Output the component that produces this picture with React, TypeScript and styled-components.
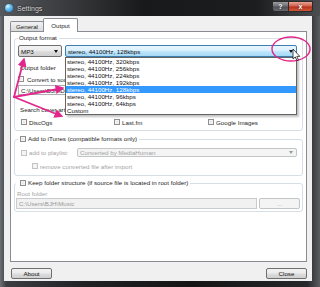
import React from "react";
import styled, { createGlobalStyle } from "styled-components";

const GlobalStyle = createGlobalStyle`
  html, body {
    margin: 0;
    padding: 0;
    background: #1b1b1b;
  }
  body {
    font-family: "Liberation Sans", Arial, sans-serif;
  }
  * {
    box-sizing: border-box;
  }
`;

const Window = styled.div`
  position: relative;
  width: 320px;
  height: 287px;
  display: flex;
  flex-direction: column;
  overflow: hidden;
  font-size: 6.2px;
  color: #1e1e1e;
  background: linear-gradient(
    90deg,
    #6c6f73 0%,
    #3b3d41 2%,
    #222326 25%,
    #141414 60%,
    #27282b 96%,
    #5a5d61 100%
  );
`;

const TitleBar = styled.div`
  height: 16px;
  flex-shrink: 0;
  display: flex;
  align-items: center;
  padding: 0 7px 0 5px;
  background: linear-gradient(90deg, #55585c 0%, #3a3c3f 20%, #18191a 45%, #1c1d1f 80%, #4b4d50 100%);
`;

const AppIcon = styled.span`
  width: 8px;
  height: 8px;
  border-radius: 50%;
  background: radial-gradient(circle at 35% 30%, #e9f7ff 0%, #6cc3f2 35%, #1f78c4 100%);
  box-shadow: 0 0 1px #0b3c66;
`;

const Title = styled.span`
  margin-left: 4px;
  font-size: 7px;
  color: #d9d9d9;
  text-shadow: 0 0 2px #000;
`;

const CaptionButtons = styled.div`
  margin-left: auto;
  align-self: flex-start;
  display: flex;
  margin-top: 1px;
`;

const CaptionButton = styled.span<{ $close?: boolean }>`
  height: 11px;
  width: ${(p) => (p.$close ? 24 : 17)}px;
  display: flex;
  align-items: center;
  justify-content: center;
  font-size: 7px;
  font-weight: bold;
  color: #fff;
  border: 1px solid #2a2a2a;
  border-left: ${(p) => (p.$close ? "none" : "1px solid #2a2a2a")};
  border-radius: ${(p) => (p.$close ? "0 0 3px 0" : "0 0 0 3px")};
  background: ${(p) =>
    p.$close
      ? "linear-gradient(180deg, #e8a496 0%, #d0604c 45%, #b8321c 55%, #cf5a3a 100%)"
      : "linear-gradient(180deg, #9a9da1 0%, #6d7074 45%, #4f5256 55%, #66696d 100%)"};
  text-shadow: 0 0 2px #333;
`;

const Client = styled.div`
  flex: 1;
  margin: 0 8px 6px 4px;
  background: #f0f0f0;
  display: flex;
  flex-direction: column;
  padding: 2px 5px 2px 6px;
`;

const TabStrip = styled.div`
  height: 13px;
  display: flex;
  align-items: flex-end;
  flex-shrink: 0;
`;

const Tab = styled.div<{ $active?: boolean }>`
  position: relative;
  z-index: ${(p) => (p.$active ? 2 : 1)};
  width: ${(p) => (p.$active ? 35 : 34)}px;
  height: ${(p) => (p.$active ? 14 : 10)}px;
  margin-bottom: ${(p) => (p.$active ? -1 : 0)}px;
  margin-left: ${(p) => (p.$active ? -1 : 0)}px;
  display: flex;
  align-items: center;
  justify-content: center;
  padding-bottom: ${(p) => (p.$active ? 1 : 0)}px;
  border: 1px solid #898c95;
  border-bottom: none;
  border-radius: 2px 2px 0 0;
  background: ${(p) => (p.$active ? "#ffffff" : "linear-gradient(180deg, #f2f2f2 0%, #e6e6e6 50%, #d9d9d9 100%)")};
`;

const Panel = styled.div`
  flex: 1;
  background: #ffffff;
  border: 1px solid #898c95;
  padding: 2px 3px 0 3px;
  display: flex;
  flex-direction: column;
`;

const Group = styled.fieldset<{ $pl: number; $pr: number; $pb: number; $gap: number }>`
  margin: ${(p) => p.$gap}px 0 0 0;
  min-width: 0;
  border: 1px solid #d5dfe5;
  border-radius: 3px;
  padding: 0 ${(p) => p.$pr}px ${(p) => p.$pb}px ${(p) => p.$pl}px;
  display: flex;
  flex-direction: column;
`;

const Legend = styled.legend<{ $pl: number }>`
  height: 8px;
  line-height: 8px;
  padding: 0 2px 0 ${(p) => p.$pl}px;
  display: flex;
  align-items: center;
  gap: 2px;
  color: #1e1e1e;
`;

const Row = styled.div<{ $h: number; $mt: number; $pl?: number; $gap?: number }>`
  height: ${(p) => p.$h}px;
  margin-top: ${(p) => p.$mt}px;
  padding-left: ${(p) => p.$pl ?? 0}px;
  display: flex;
  align-items: center;
  gap: ${(p) => p.$gap ?? 2}px;
  white-space: nowrap;
`;

const CoverRow = styled.div`
  height: 8px;
  margin-top: 5px;
  padding-left: 3px;
  display: grid;
  grid-template-columns: 93px 94px 1fr;
  align-items: center;
`;

const CheckItem = styled.div`
  display: flex;
  align-items: center;
  gap: 2px;
`;

const Label = styled.span<{ $disabled?: boolean; $w?: number }>`
  color: ${(p) => (p.$disabled ? "#a3a3a3" : "#1e1e1e")};
  width: ${(p) => (p.$w ? `${p.$w}px` : "auto")};
  flex-shrink: 0;
`;

const Check = styled.span<{ $disabled?: boolean }>`
  width: 6px;
  height: 6px;
  flex-shrink: 0;
  border: 1px solid ${(p) => (p.$disabled ? "#c3c3c3" : "#8e8f8f")};
  background: ${(p) =>
    p.$disabled ? "#f4f4f4" : "linear-gradient(135deg, #dcdcdc 0%, #f7f7f7 100%)"};
  box-shadow: inset 0 0 0 1px #f4f4f4;
`;

const ComboWrap = styled.div<{ $w?: number }>`
  position: relative;
  width: ${(p) => (p.$w ? `${p.$w}px` : "auto")};
  flex: ${(p) => (p.$w ? "none" : "1")};
  height: 100%;
  display: flex;
  align-items: center;
`;

const Combo = styled.div<{ $variant: "button" | "open" | "disabled"; $h?: number }>`
  width: 100%;
  height: ${(p) => (p.$h ? `${p.$h}px` : "100%")};
  display: flex;
  align-items: center;
  padding: 0 3px 0 2px;
  border-radius: 2px;
  border: 1px solid
    ${(p) => (p.$variant === "open" ? "#3c7fb1" : p.$variant === "disabled" ? "#c2c5c8" : "#707070")};
  color: ${(p) => (p.$variant === "disabled" ? "#a3a3a3" : "#111")};
  background: ${(p) =>
    p.$variant === "open"
      ? "linear-gradient(180deg, #eaf6fd 0%, #d9f0fc 45%, #bee6fd 55%, #a7d9f5 100%)"
      : p.$variant === "disabled"
      ? "#f4f4f4"
      : "linear-gradient(180deg, #f2f2f2 0%, #ebebeb 45%, #dddddd 55%, #cfcfcf 100%)"};
`;

const Arrow = styled.span<{ $disabled?: boolean }>`
  margin-left: auto;
  width: 0;
  height: 0;
  border-left: 2.5px solid transparent;
  border-right: 2.5px solid transparent;
  border-top: 3px solid ${(p) => (p.$disabled ? "#9a9a9a" : "#111")};
`;

const DropList = styled.ul`
  position: absolute;
  top: 100%;
  left: 0;
  right: 0;
  z-index: 5;
  margin: 0;
  padding: 0;
  list-style: none;
  background: #ffffff;
  border: 1px solid #646464;
  box-shadow: 2px 2px 2px rgba(0, 0, 0, 0.25);
`;

const DropItem = styled.li<{ $selected?: boolean }>`
  height: 7px;
  line-height: 7px;
  padding-left: 1px;
  color: ${(p) => (p.$selected ? "#ffffff" : "#111")};
  background: ${(p) => (p.$selected ? "#3399ff" : "transparent")};
`;

const TextField = styled.div<{ $disabled?: boolean }>`
  flex: 1;
  height: 100%;
  display: flex;
  align-items: center;
  padding-left: 2px;
  border: 1px solid ${(p) => (p.$disabled ? "#c9cccf" : "#abadb3")};
  background: ${(p) => (p.$disabled ? "#f1f1f1" : "#ffffff")};
  color: ${(p) => (p.$disabled ? "#9a9a9a" : "#1e1e1e")};
`;

const Button = styled.div<{ $w: number; $disabled?: boolean }>`
  width: ${(p) => p.$w}px;
  height: 11px;
  flex-shrink: 0;
  display: flex;
  align-items: center;
  justify-content: center;
  border-radius: 2px;
  border: 1px solid ${(p) => (p.$disabled ? "#c2c5c8" : "#707070")};
  color: ${(p) => (p.$disabled ? "#a3a3a3" : "#111")};
  background: ${(p) =>
    p.$disabled
      ? "#f4f4f4"
      : "linear-gradient(180deg, #f2f2f2 0%, #ebebeb 45%, #dddddd 55%, #cfcfcf 100%)"};
`;

const Footer = styled.div`
  height: 17px;
  flex-shrink: 0;
  display: flex;
  justify-content: space-between;
  align-items: flex-start;
  padding: 6px 0 0 1px;
`;

const Annotations = styled.svg`
  position: absolute;
  left: 0;
  top: 0;
  z-index: 10;
  pointer-events: none;
`;

const bitrates = ["320", "256", "224", "192", "128", "96", "64"];

export default function App() {
  const pink = "#e2268c";
  return (
    <>
      <GlobalStyle />
      <Window>
        <TitleBar>
          <AppIcon />
          <Title>Settings</Title>
          <CaptionButtons>
            <CaptionButton>?</CaptionButton>
            <CaptionButton $close>x</CaptionButton>
          </CaptionButtons>
        </TitleBar>
        <Client>
          <TabStrip>
            <Tab>General</Tab>
            <Tab $active>Output</Tab>
          </TabStrip>
          <Panel>
            <Group $pl={3} $pr={5} $pb={4} $gap={0}>
              <Legend $pl={1}>Output format</Legend>
              <Row $h={12} $mt={3} $gap={3}>
                <ComboWrap $w={44}>
                  <Combo $variant="button">
                    MP3
                    <Arrow />
                  </Combo>
                </ComboWrap>
                <ComboWrap>
                  <Combo $variant="open">
                    stereo, 44100Hz, 128kbps
                    <Arrow />
                  </Combo>
                  <DropList>
                    {bitrates.map((b) => (
                      <DropItem key={b} $selected={b === "128"}>
                        stereo, 44100Hz, {b}kbps
                      </DropItem>
                    ))}
                    <DropItem>Custom</DropItem>
                  </DropList>
                </ComboWrap>
              </Row>
              <Row $h={8} $mt={6} $pl={2}>
                <Label>Output folder</Label>
              </Row>
              <Row $h={8} $mt={4} $gap={3}>
                <Check />
                <Label>Convert to source folder</Label>
              </Row>
              <Row $h={10} $mt={2} $gap={2}>
                <TextField>C:\Users\BJH\Desktop</TextField>
                <Button $w={40}>...</Button>
              </Row>
              <Row $h={8} $mt={10} $pl={2}>
                <Label>Search cover art in:</Label>
              </Row>
              <CoverRow>
                <CheckItem>
                  <Check />
                  <Label>DiscOgs</Label>
                </CheckItem>
                <CheckItem>
                  <Check />
                  <Label>Last.fm</Label>
                </CheckItem>
                <CheckItem>
                  <Check />
                  <Label>Google Images</Label>
                </CheckItem>
              </CoverRow>
            </Group>

            <Group $pl={3} $pr={5} $pb={5} $gap={4}>
              <Legend $pl={2}>
                <Check />
                Add to iTunes (compatible formats only)
              </Legend>
              <Row $h={11} $mt={4} $pl={3}>
                <Check $disabled />
                <Label $disabled $w={46}>
                  add to playlist:
                </Label>
                <ComboWrap>
                  <Combo $variant="disabled" $h={9}>
                    Converted by MediaHuman
                    <Arrow $disabled />
                  </Combo>
                </ComboWrap>
              </Row>
              <Row $h={8} $mt={4} $pl={14}>
                <Check $disabled />
                <Label $disabled>remove converted file after import</Label>
              </Row>
            </Group>

            <Group $pl={1} $pr={2} $pb={2} $gap={3}>
              <Legend $pl={4}>
                <Check />
                Keep folder structure (if source file is located in root folder)
              </Legend>
              <Row $h={8} $mt={2} $pl={1}>
                <Label $disabled>Root folder</Label>
              </Row>
              <Row $h={11} $mt={1} $gap={2}>
                <TextField $disabled>C:\Users\BJH\Music</TextField>
                <Button $w={41} $disabled>
                  ...
                </Button>
              </Row>
            </Group>
          </Panel>
          <Footer>
            <Button $w={41}>About</Button>
            <Button $w={41}>Close</Button>
          </Footer>
        </Client>

        <Annotations width="320" height="287" viewBox="0 0 320 287">
          <defs>
            <marker id="head" viewBox="0 0 10 10" refX="6" refY="5" markerWidth="5" markerHeight="5" orient="auto">
              <path d="M0 0 L10 5 L0 10 z" fill={pink} />
            </marker>
          </defs>
          <ellipse cx="291" cy="49" rx="19" ry="12" fill="none" stroke={pink} strokeWidth="1.4" />
          <g stroke={pink} strokeWidth="1.8" strokeLinecap="round" fill="none">
            <line x1="14" y1="97" x2="23.5" y2="61" markerEnd="url(#head)" />
            <line x1="14" y1="97" x2="61" y2="88.5" markerEnd="url(#head)" />
            <line x1="14" y1="97" x2="60" y2="115.5" markerEnd="url(#head)" />
          </g>
          <path
            d="M293 49 L293 59 L295.3 57 L296.9 60.6 L298.4 60 L296.8 56.4 L299.8 56.4 Z"
            fill="#ffffff"
            stroke="#000000"
            strokeWidth="0.7"
            strokeLinejoin="round"
          />
        </Annotations>
      </Window>
    </>
  );
}
